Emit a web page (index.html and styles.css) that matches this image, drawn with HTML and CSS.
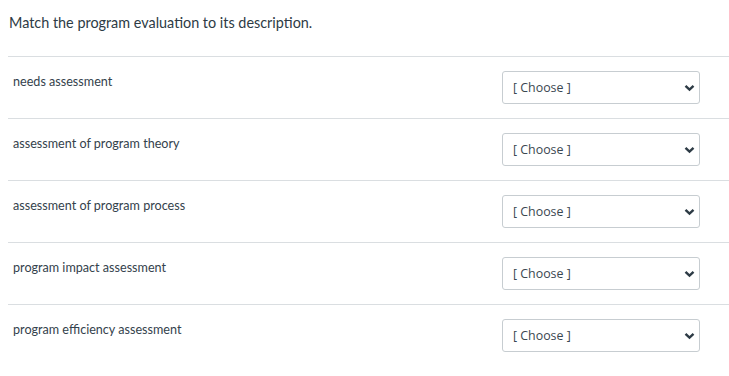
FILE: index.html
```html
<!DOCTYPE html>
<html lang="en">
<head>
    <meta charset="UTF-8">
    <meta name="viewport" content="width=device-width, initial-scale=1.0">
    <title>Matching Question</title>
    <link rel="stylesheet" href="styles.css">
</head>
<body>

    <div class="question">
        <p class="question-text">Match the program evaluation to its description.</p>

        <div class="answer">
            <div class="answer-label">needs assessment</div>
            <div class="select-wrap">
                <select class="choose"><option>[ Choose ]</option></select>
                <svg class="chevron" width="11" height="8" viewBox="0 0 11 8"><path d="M1.5 1.8 L5.5 5.6 L9.5 1.8" fill="none" stroke="#2d3b45" stroke-width="2.4"/></svg>
            </div>
        </div>

        <div class="answer">
            <div class="answer-label">assessment of program theory</div>
            <div class="select-wrap">
                <select class="choose"><option>[ Choose ]</option></select>
                <svg class="chevron" width="11" height="8" viewBox="0 0 11 8"><path d="M1.5 1.8 L5.5 5.6 L9.5 1.8" fill="none" stroke="#2d3b45" stroke-width="2.4"/></svg>
            </div>
        </div>

        <div class="answer">
            <div class="answer-label">assessment of program process</div>
            <div class="select-wrap">
                <select class="choose"><option>[ Choose ]</option></select>
                <svg class="chevron" width="11" height="8" viewBox="0 0 11 8"><path d="M1.5 1.8 L5.5 5.6 L9.5 1.8" fill="none" stroke="#2d3b45" stroke-width="2.4"/></svg>
            </div>
        </div>

        <div class="answer">
            <div class="answer-label">program impact assessment</div>
            <div class="select-wrap">
                <select class="choose"><option>[ Choose ]</option></select>
                <svg class="chevron" width="11" height="8" viewBox="0 0 11 8"><path d="M1.5 1.8 L5.5 5.6 L9.5 1.8" fill="none" stroke="#2d3b45" stroke-width="2.4"/></svg>
            </div>
        </div>

        <div class="answer">
            <div class="answer-label">program efficiency assessment</div>
            <div class="select-wrap">
                <select class="choose"><option>[ Choose ]</option></select>
                <svg class="chevron" width="11" height="8" viewBox="0 0 11 8"><path d="M1.5 1.8 L5.5 5.6 L9.5 1.8" fill="none" stroke="#2d3b45" stroke-width="2.4"/></svg>
            </div>
        </div>
    </div>

</body>
</html>
```

FILE: styles.css
```css
/* Reset */
* { margin: 0; padding: 0; box-sizing: border-box; }

body {
    font-family: Lato, "Noto Sans", sans-serif;
    background: white;
    color: #2d3b45;
}

/* Question */
.question {
    padding-left: 8px;
}

.question-text {
    font-size: 14.4px;
    line-height: 20px;
    padding: 13px 0 23px 1px;
}

/* Answer rows */
.answer {
    display: flex;
    justify-content: space-between;
    align-items: flex-start;
    border-top: 1px solid #dadee1;
    padding: 14px 29px 14px 5px;
    height: 62px;
}

.answer-label {
    font-size: 12.6px;
    line-height: 16px;
    padding-top: 3px;
    color: #34424c;
}

/* Select */
.select-wrap {
    position: relative;
    width: 198px;
    height: 33px;
}

.choose {
    appearance: none;
    -webkit-appearance: none;
    width: 100%;
    height: 100%;
    border: 1px solid #c7cdd1;
    border-radius: 3px;
    background: white;
    font-family: "Open Sans", sans-serif;
    font-size: 12.4px;
    color: #3a4750;
    padding: 0 24px 0 10px;
}

.chevron {
    position: absolute;
    right: 5px;
    top: 13px;
    pointer-events: none;
}
```
